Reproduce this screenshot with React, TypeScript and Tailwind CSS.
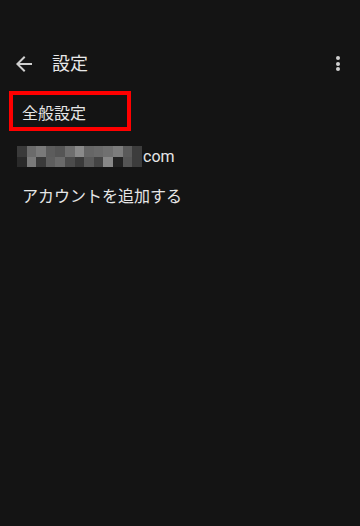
const mosaicTop = [
  "#3a3a3a", "#6b6b6b", "#7a7a7a", "#5c5c5c", "#555555", "#6e6e6e", "#8a8a8a",
  "#666666", "#6a6a6a", "#707070", "#7c7c7c", "#5a5a5a", "#3c3c3c",
];
const mosaicBottom = [
  "#2a2a2a", "#7a7a7a", "#3a3a3a", "#5e5e5e", "#6a6a6a", "#4c4c4c", "#3a3a3a",
  "#5a5a5a", "#444444", "#888888", "#222222", "#555555", "#3c3c3c",
];

const App = () => {
  return (
    <div
      className="w-[360px] h-[526px] bg-[#141414] text-[#e6e6e6] overflow-hidden"
      style={{ fontFamily: '"Roboto", "Noto Sans CJK JP", sans-serif' }}
    >
      <header className="pt-[36px] h-[91px] flex items-center pl-[12px] pr-[10px]">
        <svg width="24" height="24" viewBox="0 0 24 24" className="text-[#cfcfcf]">
          <path
            d="M20 11H7.83l5.59-5.59L12 4l-8 8 8 8 1.41-1.41L7.83 13H20v-2z"
            fill="currentColor"
          />
        </svg>
        <h1 className="ml-[16px] text-[18px] leading-[24px] text-[#e8e8e8]">設定</h1>
        <div className="ml-auto w-[24px] h-[24px] flex flex-col items-center justify-center gap-[1.5px]">
          <span className="w-[4px] h-[4px] rounded-full bg-[#cfcfcf]" />
          <span className="w-[4px] h-[4px] rounded-full bg-[#cfcfcf]" />
          <span className="w-[4px] h-[4px] rounded-full bg-[#cfcfcf]" />
        </div>
      </header>

      <div className="ml-[9px] w-[122px] h-[40px] border-4 border-[#ff0000] pl-[9px] pt-[9px]">
        <span className="block text-[16px] leading-[20px]">全般設定</span>
      </div>

      <div className="mt-[15px] ml-[17px] flex items-center h-[21px]">
        <div className="w-[125px] h-[21px] flex flex-col">
          <div className="flex flex-1">
            {mosaicTop.map((c, i) => (
              <span key={i} className="flex-1" style={{ backgroundColor: c }} />
            ))}
          </div>
          <div className="flex flex-1">
            {mosaicBottom.map((c, i) => (
              <span key={i} className="flex-1" style={{ backgroundColor: c }} />
            ))}
          </div>
        </div>
        <span className="ml-[1px] text-[16px] leading-[20px]">com</span>
      </div>

      <p className="mt-[20px] ml-[22px] text-[16px] leading-[20px]">アカウントを追加する</p>
    </div>
  );
};

export default App;
